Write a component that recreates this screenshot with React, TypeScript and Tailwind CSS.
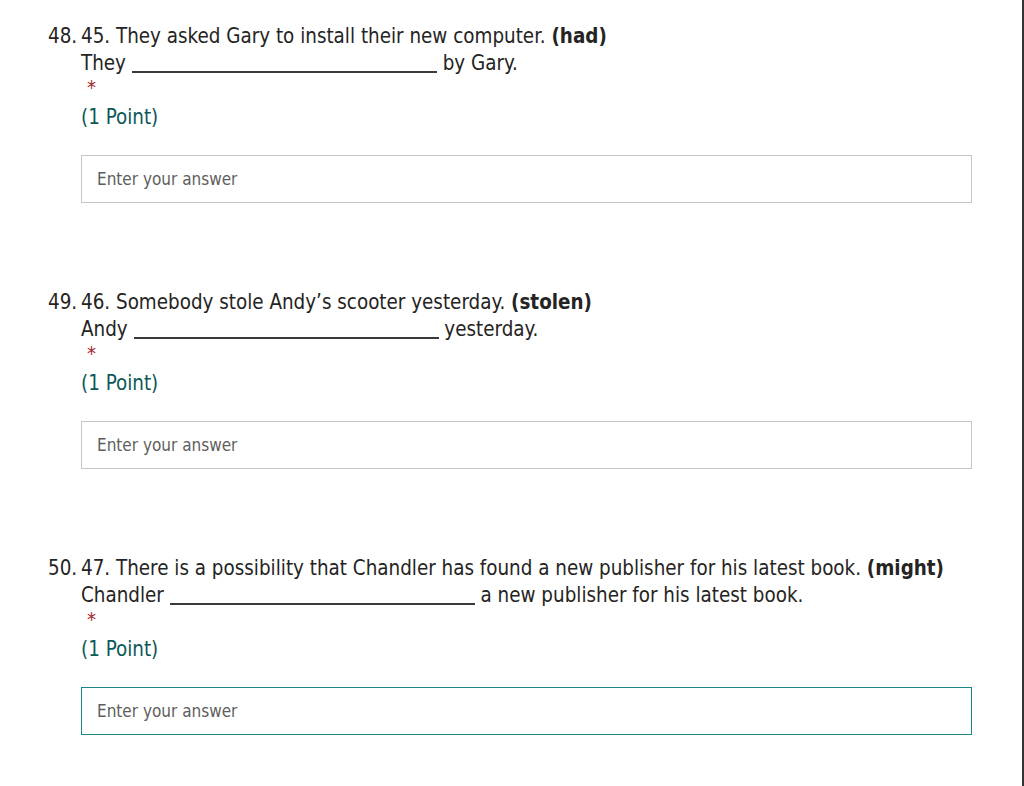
import React from 'react';

type Q = {
  no: number;
  text: string;
  hint: string;
  before: string;
  after: string;
  focused?: boolean;
};

const questions: Q[] = [
  { no: 48, text: '45. They asked Gary to install their new computer.', hint: '(had)', before: 'They', after: 'by Gary.' },
  { no: 49, text: '46. Somebody stole Andy\u2019s scooter yesterday.', hint: '(stolen)', before: 'Andy', after: 'yesterday.' },
  { no: 50, text: '47. There is a possibility that Chandler has found a new publisher for his latest book.', hint: '(might)', before: 'Chandler', after: 'a new publisher for his latest book.', focused: true },
];

function Question({ q }: { q: Q }) {
  return (
    <div className="flex">
      <div className="w-[33px] shrink-0 text-[20.4px] leading-[27px] whitespace-nowrap">{q.no}.</div>
      <div className="flex-1 pr-[50px]">
        <div className="text-[20.4px] leading-[27px] text-[#252423] whitespace-nowrap">
          {q.text} <span className="font-bold">{q.hint}</span>
        </div>
        <div className="text-[20.4px] leading-[27px] text-[#252423] whitespace-nowrap">
          {q.before}{' '}
          <span className="inline-block w-[305px] h-[21px] border-b-2 border-[#3b3a39] align-[-3px]" />{' '}
          {q.after}
        </div>
        <div className="pl-[6px] text-[20px] leading-[20px] h-[24px] text-[#a4262c]">*</div>
        <div className="mt-[3px] text-[20.4px] leading-[27px] text-[#0b5858]">(1 Point)</div>
        <div className="mt-[24px]">
          <input
            autoFocus={q.focused}
            placeholder="Enter your answer"
            className={
              'w-full h-[48px] px-[15px] text-[17px] bg-white outline-none caret-[#333] placeholder:text-[#605e5c] ' +
              (q.focused ? 'border border-[#1c8585]' : 'border border-[#c8c6c4]')
            }
          />
        </div>
      </div>
    </div>
  );
}

export default function App() {
  return (
    <div className="min-h-[786px] bg-white border-r-2 border-[#333] pl-[48px] pt-[23px] text-[#252423]" style={{ fontFamily: '"DejaVu Sans Condensed", "Noto Sans", sans-serif' }}>
      <div className="flex flex-col gap-[86px]">
        {questions.map((q) => (
          <Question key={q.no} q={q} />
        ))}
      </div>
    </div>
  );
}
